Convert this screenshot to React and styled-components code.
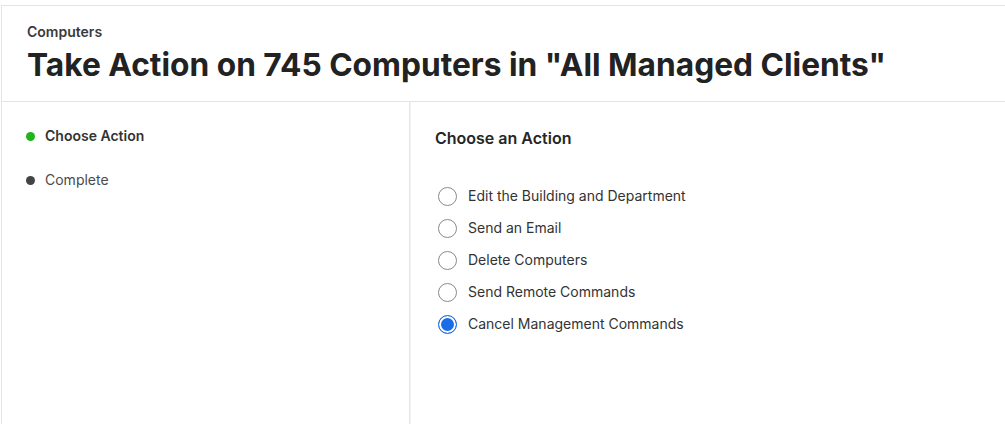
import { useState } from 'react';
import styled, { createGlobalStyle } from 'styled-components';

const GlobalStyle = createGlobalStyle`
  html, body {
    margin: 0;
    padding: 0;
    background: #ffffff;
  }
  body {
    font-family: Inter, "Noto Sans", "Liberation Sans", sans-serif;
    color: #262626;
  }
`;

const Page = styled.div`
  padding: 5px 0 0 1px;
  height: 100vh;
  box-sizing: border-box;
  display: flex;
`;

const Frame = styled.div`
  flex: 1;
  display: flex;
  flex-direction: column;
  border-top: 1px solid #e4e4e4;
  border-left: 1px solid #e4e4e4;
`;

const Header = styled.header`
  padding: 16px 25px 17px;
  border-bottom: 1px solid #e4e4e4;
`;

const Eyebrow = styled.div`
  font-size: 14px;
  font-weight: 600;
  line-height: 20px;
  color: #3a3a3a;
`;

const Title = styled.h1`
  margin: 4px 0 0;
  font-size: 31.7px;
  font-weight: 700;
  line-height: 38px;
  color: #222222;
`;

const Body = styled.div`
  flex: 1;
  display: flex;
`;

const Sidebar = styled.nav`
  flex: 0 0 408px;
  box-sizing: border-box;
  border-right: 1px solid #e6e6e6;
  box-shadow: 1px 0 0 #f4f4f4;
  padding: 24px 0 0 24px;
  display: flex;
  flex-direction: column;
  gap: 24px;
`;

const Step = styled.div`
  display: flex;
  align-items: center;
  gap: 10px;
  font-size: 14px;
  line-height: 20px;
  font-weight: ${(p) => (p.active ? 600 : 400)};
  color: ${(p) => (p.active ? '#333333' : '#4a4a4a')};
`;

const Dot = styled.span`
  width: 9px;
  height: 9px;
  border-radius: 50%;
  background: ${(p) => (p.active ? '#1fb31f' : '#444444')};
`;

const Content = styled.main`
  flex: 1;
  padding: 25px 0 0 25px;
`;

const SectionTitle = styled.h2`
  margin: 0;
  font-size: 16px;
  font-weight: 600;
  line-height: 22px;
  color: #262626;
`;

const Options = styled.div`
  margin-top: 37px;
  display: flex;
  flex-direction: column;
  gap: 12px;
`;

const Option = styled.label`
  display: flex;
  align-items: center;
  gap: 11px;
  padding-left: 3px;
  font-size: 14px;
  line-height: 20px;
  color: #333333;
  cursor: pointer;
`;

const Radio = styled.span`
  width: 19px;
  height: 19px;
  box-sizing: border-box;
  border-radius: 50%;
  border: ${(p) => (p.checked ? '1.5px solid #1a6ce8' : '1px solid #8a8a8a')};
  background: ${(p) => (p.checked ? '#1a6ce8' : '#ffffff')};
  box-shadow: ${(p) => (p.checked ? 'inset 0 0 0 2px #ffffff' : 'none')};
`;

const HiddenInput = styled.input`
  position: absolute;
  opacity: 0;
  pointer-events: none;
`;

const actions = [
  'Edit the Building and Department',
  'Send an Email',
  'Delete Computers',
  'Send Remote Commands',
  'Cancel Management Commands',
];

const App = () => {
  const [choice, setChoice] = useState(actions[4]);

  return (
    <>
      <GlobalStyle />
      <Page>
        <Frame>
          <Header>
            <Eyebrow>Computers</Eyebrow>
            <Title>Take Action on 745 Computers in "All Managed Clients"</Title>
          </Header>
          <Body>
            <Sidebar>
              <Step active>
                <Dot active />
                Choose Action
              </Step>
              <Step>
                <Dot />
                Complete
              </Step>
            </Sidebar>
            <Content>
              <SectionTitle>Choose an Action</SectionTitle>
              <Options>
                {actions.map((a) => (
                  <Option key={a}>
                    <HiddenInput
                      type="radio"
                      name="action"
                      checked={choice === a}
                      onChange={() => setChoice(a)}
                    />
                    <Radio checked={choice === a} />
                    {a}
                  </Option>
                ))}
              </Options>
            </Content>
          </Body>
        </Frame>
      </Page>
    </>
  );
};

export default App;
